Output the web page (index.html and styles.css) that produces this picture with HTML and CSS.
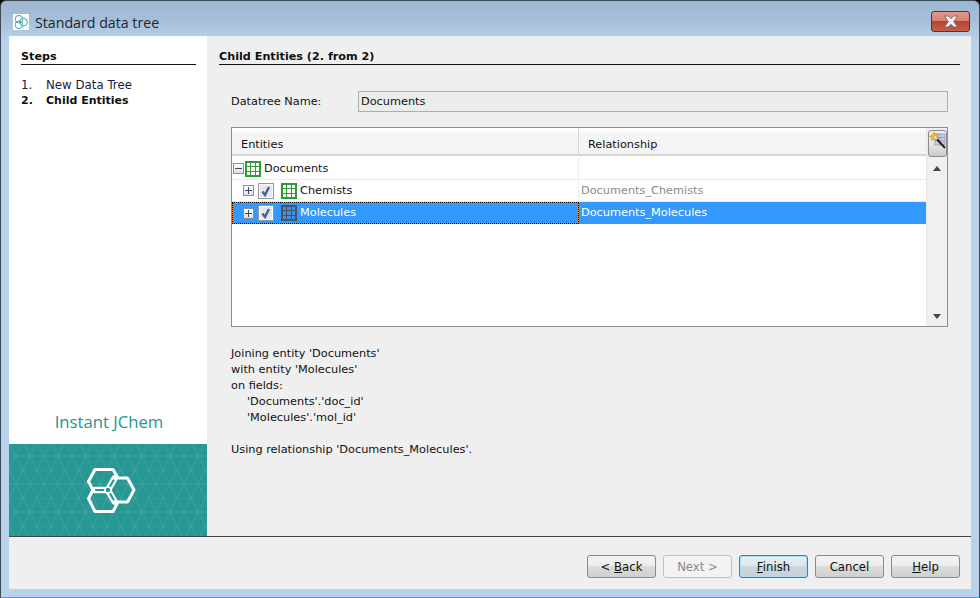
FILE: index.html
```html
<!DOCTYPE html>
<html lang="en">
<head>
<meta charset="utf-8">
<title>Standard data tree</title>
<link rel="stylesheet" href="styles.css">
</head>
<body>
<div class="window">
  <header class="titlebar">
    <svg class="app-icon" width="16" height="16" viewBox="0 0 16 16"><rect width="16" height="16" fill="#fff"/><g fill="none" stroke="#4aa6a2" stroke-width="1"><circle cx="6" cy="5.200" r="3.800"/><circle cx="6" cy="10.800" r="3.800"/><circle cx="10.500" cy="8" r="3.800"/></g></svg>
    <span class="title">Standard data tree</span>
    <button class="close" aria-label="Close"><svg width="18" height="13" viewBox="0 0 18 13"><path d="M2.500 1h3.700L9 3.600 11.800 1h3.700l-3.800 5.500 3.800 5.500h-3.700L9 9.400 6.200 12H2.500l3.800-5.500z" fill="#eef1f5" stroke="#6a5a60" stroke-width=".8"/></svg></button>
  </header>
  <div class="client">
    <div class="main">
      <aside class="side">
        <h2 class="heading">Steps</h2>
        <ol class="steps">
          <li><span class="num">1.</span>New Data Tree</li>
          <li class="current"><span class="num">2.</span>Child Entities</li>
        </ol>
        <div class="brand">Instant JChem</div>
        <div class="banner">
          <svg width="198" height="92" viewBox="0 0 198 92">
            <defs>
              <pattern id="tri" width="28" height="28" patternUnits="userSpaceOnUse" y="-2">
                <path d="M0 0L14 28L28 0M0 28L14 0L28 28M0 14H28M0 0H28" fill="none" stroke="#fff" stroke-opacity=".09" stroke-width="1"/>
              </pattern>
            </defs>
            <rect width="198" height="92" fill="url(#tri)"/>
            <path d="M86 25.500H104L109 34H118.500L125 46 118.500 58H109L104 67.500H86L79.500 54.500 84 46 79.500 37.500Z" fill="none" stroke="#fff" stroke-width="3" stroke-linejoin="round"/>
            <g stroke-linecap="round">
              <path d="M86 46H99M99 46L105.500 34.500M99 46L105.500 57.500" fill="none" stroke="#fff" stroke-width="6.500"/>
              <path d="M87 46H97M100 44L104.500 36.500M100 48L104.500 55.500" fill="none" stroke="#279793" stroke-width="2.200"/>
            </g>
            <circle cx="99" cy="46" r="3" fill="#279793" stroke="#fff" stroke-width="1.600"/>
          </svg>
        </div>
      </aside>
      <section class="content">
        <h2 class="heading">Child Entities (2. from 2)</h2>
        <div class="form">
          <div class="name-row">
            <label class="name-label">Datatree Name:</label>
            <div class="name-input">Documents</div>
          </div>
          <div class="table">
            <div class="table-body">
              <div class="thead">
                <div class="th th-1">Entities</div>
                <div class="th th-2">Relationship</div>
              </div>
              <div class="row row-root">
                <div class="cell c1">
                  <span class="exp minus"></span>
                  <svg class="ent" width="16" height="16" viewBox="0 0 16 16"><rect width="16" height="16" fill="#2f9a3a"/><path d="M2 2h3v3H2zM6 2h4v3H6zM11 2h3v3h-3zM2 6h3v4H2zM6 6h4v4H6zM11 6h3v4h-3zM2 11h3v3H2zM6 11h4v3H6zM11 11h3v3h-3z" fill="#fff"/></svg>
                  <span class="lbl">Documents</span>
                </div>
                <div class="cell c2"></div>
              </div>
              <div class="row">
                <div class="cell c1 child">
                  <span class="exp plus"></span>
                  <svg class="chk" width="16" height="16" viewBox="0 0 16 16"><rect x=".5" y=".5" width="15" height="15" fill="#e4e7ee" stroke="#969696"/><rect x="1.500" y="1.500" width="13" height="13" fill="none" stroke="#fafafa"/><path d="M4.500 8.500l2.500 3.500 4-8" fill="none" stroke="#4a5f9c" stroke-width="2.400"/></svg>
                  <svg class="ent" width="16" height="16" viewBox="0 0 16 16"><rect width="16" height="16" fill="#2f9a3a"/><path d="M2 2h3v3H2zM6 2h4v3H6zM11 2h3v3h-3zM2 6h3v4H2zM6 6h4v4H6zM11 6h3v4h-3zM2 11h3v3H2zM6 11h4v3H6zM11 11h3v3h-3z" fill="#fff"/></svg>
                  <span class="lbl">Chemists</span>
                </div>
                <div class="cell c2 muted">Documents_Chemists</div>
              </div>
              <div class="row selected">
                <div class="cell c1 child focus">
                  <span class="exp plus"></span>
                  <svg class="chk" width="16" height="16" viewBox="0 0 16 16"><rect x=".5" y=".5" width="15" height="15" fill="#e4e7ee" stroke="#969696"/><rect x="1.500" y="1.500" width="13" height="13" fill="none" stroke="#fafafa"/><path d="M4.500 8.500l2.500 3.500 4-8" fill="none" stroke="#4a5f9c" stroke-width="2.400"/></svg>
                  <svg class="ent" width="16" height="16" viewBox="0 0 16 16"><rect width="16" height="16" fill="#4a5362"/><path d="M2 2h3v3H2zM6 2h4v3H6zM11 2h3v3h-3zM2 6h3v4H2zM6 6h4v4H6zM11 6h3v4h-3zM2 11h3v3H2zM6 11h4v3H6zM11 11h3v3h-3z" fill="#3f8fe6"/></svg>
                  <span class="lbl">Molecules</span>
                </div>
                <div class="cell c2 focus-cell">Documents_Molecules</div>
              </div>
            </div>
            <div class="scroll">
              <button class="wand" aria-label="Configure"><svg width="17" height="18" viewBox="0 0 17 18"><rect x="6" y="2" width="10" height="11" fill="#c7c9e6" stroke="#8b8fc0" stroke-width=".7"/><path d="M6 5.500h10M6 9h10M11 2v11" stroke="#8b8fc0" stroke-width=".7"/><path d="M5 0l1.200 2.300L9 1.500 8 4l2 1.800-2.700.5L7 9 5 7.300 2.500 8.500 3 6 .5 4.500 3 3.500z" fill="#f2c320" stroke="#b5811a" stroke-width=".5"/><path d="M5 4l11 12" stroke="#222" stroke-width="2"/><path d="M5 4l3 3.300" stroke="#eee" stroke-width="2"/></svg></button>
              <span class="arrow up"></span>
              <span class="arrow down"></span>
            </div>
          </div>
          <div class="info">
            <p>Joining entity 'Documents'<br>with entity 'Molecules'<br>on fields:</p>
            <p class="fields">'Documents'.'doc_id'<br>'Molecules'.'mol_id'</p>
            <p class="using">Using relationship 'Documents_Molecules'.</p>
          </div>
        </div>
      </section>
    </div>
    <footer class="footer">
      <button class="btn">&lt; <u>B</u>ack</button>
      <button class="btn disabled">Next &gt;</button>
      <button class="btn default"><u>F</u>inish</button>
      <button class="btn">Cancel</button>
      <button class="btn"><u>H</u>elp</button>
    </footer>
  </div>
</div>
</body>
</html>
```
FILE: styles.css
```css
* { box-sizing: border-box; }
html, body { margin: 0; padding: 0; }
body { width: 980px; height: 598px; overflow: hidden; background: #000; font-family: "DejaVu Sans", sans-serif; font-size: 11.300px; color: #111; }
.window { width: 980px; height: 598px; display: flex; flex-direction: column; padding: 0 8px 8px; border: 1px solid #3a4a55; border-bottom-color: #1fb4c8; border-radius: 6px 6px 0 0; background: linear-gradient(#9db6d1 0, #a6bfda 20px, #b9d2ec 40px, #b9d2ec 100%); }
.titlebar { height: 35px; flex: none; display: flex; align-items: flex-start; padding: 0 0 0 4px; }
.app-icon { flex: none; margin-top: 13px; }
.title { margin: 12px 0 0 6px; font-family: "Open Sans", sans-serif; font-size: 14.200px; line-height: 20px; color: #1c2530; }
.close { margin: 10px 1px 0 auto; width: 39px; height: 21px; padding: 0; border: 1px solid #5d2d3d; border-radius: 3px; background: linear-gradient(#e39a8d 0, #d98072 45%, #b8432e 50%, #c2604c 100%); display: flex; align-items: center; justify-content: center; }
.client { flex: 1; display: flex; flex-direction: column; background: #efefef; min-height: 0; }
.main { height: 501px; flex: none; display: flex; border-bottom: 1px solid #444; }
.side { width: 198px; flex: none; background: #fff; display: flex; flex-direction: column; padding-top: 14px; }
.heading { margin: 0; font-size: 11.200px; font-weight: 700; line-height: 14px; border-bottom: 1px solid #111; color: #111; }
.side .heading { margin: 0 11px 0 12px; }
.steps { list-style: none; margin: 12px 0 0 12px; padding: 0; line-height: 16px; }
.steps li { display: flex; color: #1a1a3a; font-size: 11.800px; }
.num { width: 25px; }
.steps .current { font-weight: 700; color: #111; font-size: 11px; }
.brand { margin-top: auto; padding-left: 2px; text-align: center; font-family: "Open Sans", sans-serif; font-size: 16.700px; line-height: 26px; height: 35px; color: #24958f; }
.banner { height: 92px; background: #279793; flex: none; }
.banner svg { display: block; }
.content { flex: 1; min-width: 0; padding: 14px 11px 0 12px; }
.form { padding: 26px 12px 0 12px; }
.name-row { display: flex; align-items: center; height: 21px; }
.name-label { width: 127px; }
.name-input { flex: 1; height: 21px; line-height: 20px; padding-left: 2px; border: 1px solid #a9b0b0; background: #ebedeb; }
.table { margin-top: 15px; height: 200px; display: flex; border: 1px solid #8a8f95; background: #fff; }
.table-body { flex: 1; min-width: 0; }
.scroll { width: 21px; flex: none; background: #f0f0f0; display: flex; flex-direction: column; align-items: center; border-left: 1px solid #e4e4e4; }
.wand { width: 19px; height: 27px; margin-top: 2px; padding: 1px 0 0; border: 1px solid #8c8c8c; border-radius: 3px; background: linear-gradient(#eee 0, #e4e4e4 60%, #c9c9c9 100%); display: flex; justify-content: center; }
.arrow { width: 0; height: 0; border-left: 4px solid transparent; border-right: 4px solid transparent; }
.arrow.up { border-bottom: 5px solid #444; margin-top: 9px; }
.arrow.down { border-top: 5px solid #444; margin-top: auto; margin-bottom: 7px; }
.thead { height: 28px; display: flex; border-bottom: 2px solid #d5d5d5; background: linear-gradient(#fff 0, #fff 3px, #f6f6f6 4px, #f3f3f3 100%); }
.th { line-height: 34px; padding-left: 9px; height: 26px; }
.th-1 { width: 347px; border-right: 1px solid #d5d5d5; }
.th-2 { flex: 1; }
.row { height: 22px; display: flex; border-bottom: 1px solid #ececec; line-height: 23px; }
.row-root { margin-top: 2px; }
.cell { display: flex; align-items: center; height: 21px; }
.c1 { width: 347px; flex: none; border-right: 1px solid #ececec; padding-left: 1px; }
.c2 { flex: 1; padding-left: 2px; }
.child { padding-left: 11px; }
.muted { color: #8a8a8a; }
.exp { width: 11px; height: 11px; border: 1px solid #8a919a; background: linear-gradient(#fff, #d9dfe8); flex: none; position: relative; }
.exp::before { content: ""; position: absolute; left: 1px; right: 1px; top: 4px; height: 1px; background: #3b4a66; }
.plus::after { content: ""; position: absolute; top: 1px; bottom: 1px; left: 4px; width: 1px; background: #3b4a66; }
.minus + .ent { margin-left: 1px; }
.chk { margin-left: 4px; flex: none; }
.chk + .ent { margin-left: 7px; }
.ent { flex: none; }
.lbl { margin-left: 3px; }
.selected { background: #3399ff; color: #fff; border-bottom: 0; line-height: 22px; }
.selected .cell { height: 22px; }
.focus { border: 1px solid #e08020; outline: 1px dotted #000; outline-offset: -1px; padding-left: 10px; }
.info { margin-top: 19px; line-height: 16px; }
.info p { margin: 0; }
.info .fields { padding-left: 16px; }
.info .using { margin-top: 16px; }
.footer { flex: 1; display: flex; justify-content: flex-end; gap: 7px; padding: 18px 11px 0 0; align-items: flex-start; }
.btn { width: 69px; height: 23px; padding: 0; font: inherit; font-size: 11.700px; color: #111; border: 1px solid #8a8a8a; border-radius: 3px; background: linear-gradient(#f3f3f3 0, #ececec 45%, #dcdcdc 50%, #d0d0d0 100%); }
.btn.disabled { color: #8a8a8a; border-color: #c0c0c0; background: #f3f3f3; }
.btn.default { border-color: #3c7fb1; background: linear-gradient(#e9eff3 0, #dfe7ec 45%, #ccd7de 50%, #c4d2dc 100%); box-shadow: inset 0 0 0 1px #a9dcf5; }
```
